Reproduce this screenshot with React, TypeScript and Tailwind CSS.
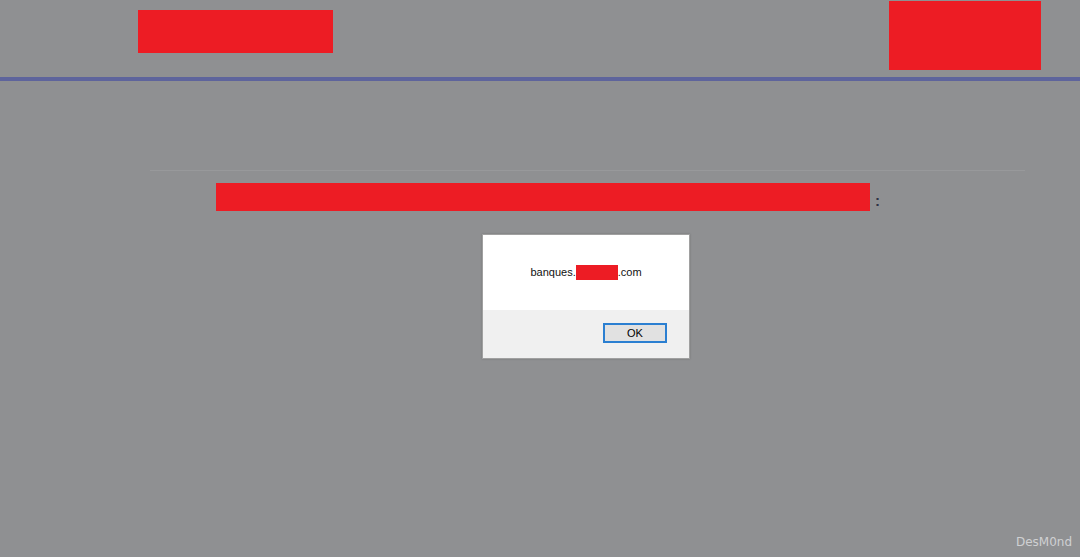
export default function App() {
  return (
    <div className="relative w-[1080px] h-[557px] overflow-hidden bg-[#8f9092]" style={{ fontFamily: '"Liberation Sans", Arial, sans-serif' }}>
      <div className="flex h-[77px] items-start justify-between">
        <div className="ml-[138px] mt-[10px] h-[43px] w-[195px] bg-[#ed1c24]" />
        <div className="mr-[39px] mt-[1px] h-[69px] w-[152px] bg-[#ed1c24]" />
      </div>
      <div className="h-[4px] bg-[#5e649c]" />
      <div className="ml-[150px] mt-[89px] h-px w-[875px] bg-[#98999b]" />
      <div className="ml-[216px] mt-[12px] flex items-end">
        <div className="h-[28px] w-[654px] bg-[#ed1c24]" />
        <span className="ml-[5px] text-[15px] font-bold leading-[20px] text-[#2f3245]">:</span>
      </div>
      <div className="ml-[482px] mt-[23px] w-[208px] border border-[#a0a0a0] bg-white shadow-[0_0_2px_rgba(0,0,0,0.2)]">
        <div className="flex h-[75px] items-center justify-center text-[11px] text-[#111]">
          <span>banques.</span>
          <span className="h-[15px] w-[42px] bg-[#ed1c24]" />
          <span>.com</span>
        </div>
        <div className="flex h-[48px] items-start justify-end bg-[#f0f0f0] pr-[22px] pt-[13px]">
          <button className="flex h-[20px] w-[64px] items-center justify-center border-2 border-[#2b7fd1] bg-[#e1e1e1] text-[11px] text-black">
            OK
          </button>
        </div>
      </div>
      <div className="absolute bottom-[6px] right-[8px] text-[12px] text-[#cfd0d2]" style={{ fontFamily: '"DejaVu Sans", sans-serif' }}>
        DesM0nd
      </div>
    </div>
  );
}
